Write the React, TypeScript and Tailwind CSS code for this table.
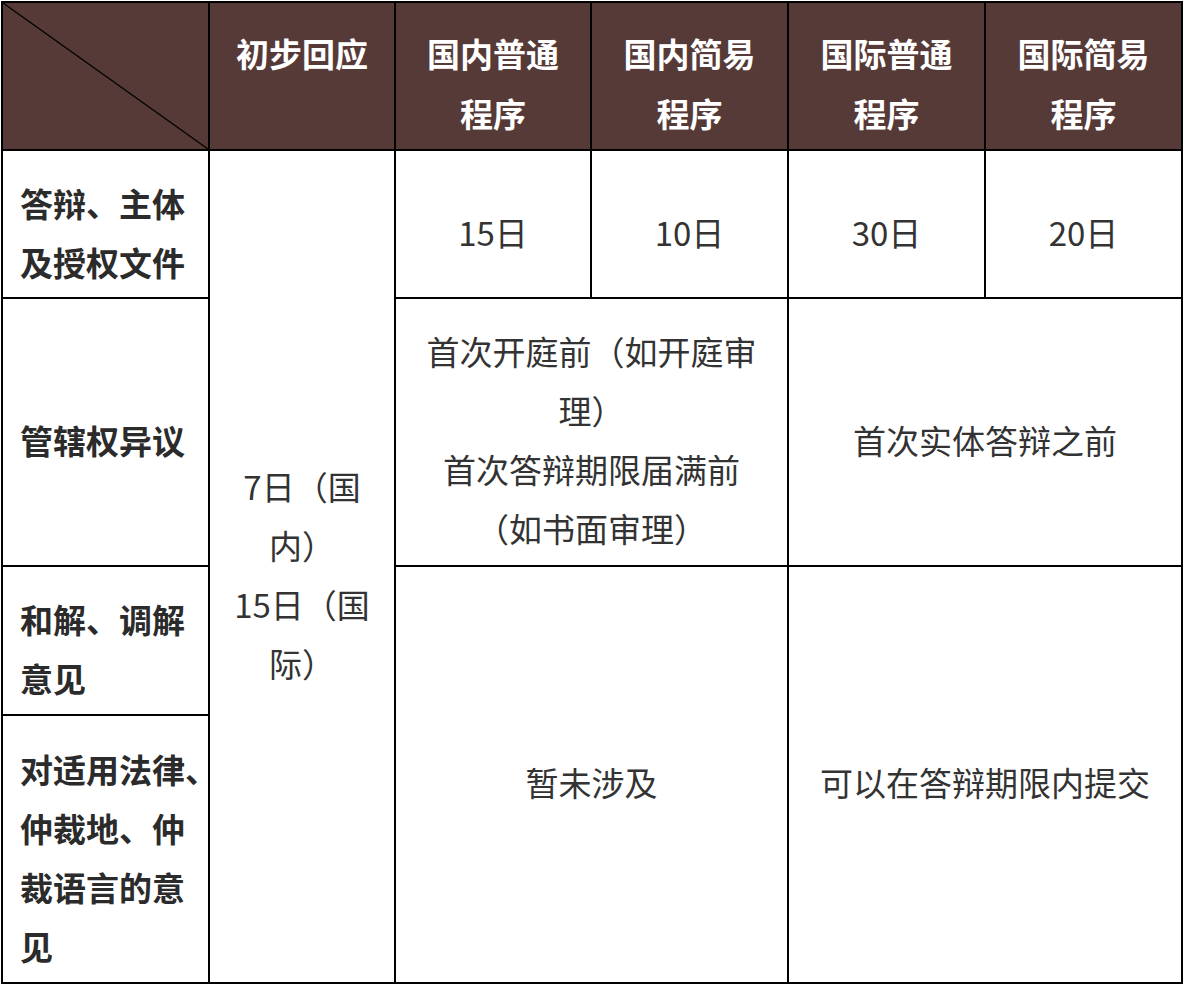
export default function App() {
  const head =
    "bg-[#553a37] flex flex-col items-center pt-[20px] text-white font-bold text-[33px] leading-[60px] whitespace-nowrap";
  const label =
    "bg-white flex flex-col justify-center items-start pl-[17px] pt-[17px] font-bold text-[33px] leading-[59px] text-[#2b2b2b] whitespace-nowrap";
  const cell =
    "bg-white flex flex-col justify-center items-center pt-[16px] text-[33px] leading-[59px] text-[#333333] whitespace-nowrap";

  return (
    <div className="min-h-[990px] bg-white pl-px pt-px font-['Noto_Sans_CJK_SC','Noto_Sans',sans-serif]">
      <div className="w-fit grid grid-cols-[205px_184px_194px_195px_195px_195px] grid-rows-[146px_146px_266px_147px_266px] gap-[2px] border-2 border-black bg-black">
        {/* header row */}
        <div className="bg-[#553a37] relative">
          <svg
            className="absolute inset-0 w-full h-full"
            viewBox="0 0 205 146"
            preserveAspectRatio="none"
          >
            <line x1="0" y1="0" x2="205" y2="146" stroke="#000" strokeWidth="1.3" />
          </svg>
        </div>
        <div className={head}>
          <span>初步回应</span>
        </div>
        <div className={head}>
          <span>国内普通</span>
          <span>程序</span>
        </div>
        <div className={head}>
          <span>国内简易</span>
          <span>程序</span>
        </div>
        <div className={head}>
          <span>国际普通</span>
          <span>程序</span>
        </div>
        <div className={head}>
          <span>国际简易</span>
          <span>程序</span>
        </div>

        {/* row 1 */}
        <div className={label}>
          <span>答辩、主体</span>
          <span>及授权文件</span>
        </div>
        <div className={`${cell} row-span-4`}>
          <span>7日（国</span>
          <span>内）</span>
          <span>15日（国</span>
          <span>际）</span>
        </div>
        <div className={cell}>
          <span>15日</span>
        </div>
        <div className={cell}>
          <span>10日</span>
        </div>
        <div className={cell}>
          <span>30日</span>
        </div>
        <div className={cell}>
          <span>20日</span>
        </div>

        {/* row 2 */}
        <div className={label}>
          <span>管辖权异议</span>
        </div>
        <div className={`${cell} col-span-2`}>
          <span>首次开庭前（如开庭审</span>
          <span>理）</span>
          <span>首次答辩期限届满前</span>
          <span>（如书面审理）</span>
        </div>
        <div className={`${cell} col-span-2`}>
          <span>首次实体答辩之前</span>
        </div>

        {/* row 3 */}
        <div className={label}>
          <span>和解、调解</span>
          <span>意见</span>
        </div>
        <div className={`${cell} col-span-2 row-span-2`}>
          <span>暂未涉及</span>
        </div>
        <div className={`${cell} col-span-2 row-span-2`}>
          <span>可以在答辩期限内提交</span>
        </div>

        {/* row 4 */}
        <div className={label}>
          <span>对适用法律、</span>
          <span>仲裁地、仲</span>
          <span>裁语言的意</span>
          <span>见</span>
        </div>
      </div>
    </div>
  );
}
